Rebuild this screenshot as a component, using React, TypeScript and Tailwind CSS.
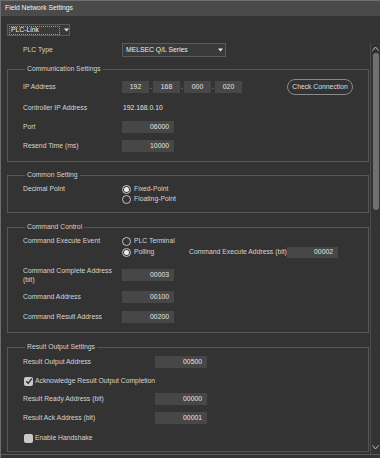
import React from 'react';

const font = "font-['Liberation_Sans',Arial,sans-serif]";

const Arrow = () => (
    <svg width="5" height="4" viewBox="0 0 5 4" className="block">
        <path d="M0 0.5 H5 L2.5 3.5 Z" fill="#e8e8e8" />
    </svg>
);

const NumBox = ({ value, w = 'w-[52px]', h = 'h-[12px]' }: { value: string; w?: string; h?: string }) => (
    <div className={`${w} ${h} bg-[#474747] flex items-center justify-end pr-[5px] text-[#e4e4e4]`}>{value}</div>
);

const IpBox = ({ value }: { value: string }) => (
    <div className="w-[27px] h-[12px] bg-[#474747] flex items-center justify-center text-[#e4e4e4]">{value}</div>
);

const Dot = () => <div className="w-[4px] text-center text-[#cfcfcf]">.</div>;

const Radio = ({ checked, label }: { checked?: boolean; label: string }) => (
    <div className="flex items-center gap-[3px]">
        <div className="w-[9px] h-[9px] rounded-full border border-[#c4c4c4] flex items-center justify-center">
            {checked && <div className="w-[5px] h-[5px] rounded-full bg-[#ececec]" />}
        </div>
        <span>{label}</span>
    </div>
);

const Check = ({ checked, label }: { checked?: boolean; label: string }) => (
    <div className="flex items-center gap-[2px]">
        <div className="w-[9px] h-[9px] rounded-[2px] bg-[#c9c9c9] flex items-center justify-center">
            {checked && (
                <svg width="8" height="8" viewBox="0 0 8 8">
                    <path d="M1.2 4.2 L3.2 6.2 L6.8 1.6" stroke="#2a2a2a" strokeWidth="1.4" fill="none" />
                </svg>
            )}
        </div>
        <span>{label}</span>
    </div>
);

const Group = ({ title, className, children }: { title: string; className: string; children: React.ReactNode }) => (
    <fieldset className={`ml-[6px] w-[362px] border border-[#565656] ${className}`}>
        <legend className="ml-[2px] px-[2px] leading-[10px] text-[#d2d2d2]">{title}</legend>
        {children}
    </fieldset>
);

const App = () => {
    return (
        <div className={`w-[380px] h-[458px] bg-[#333333] border-t border-l border-[#6e6e6e] flex flex-col overflow-hidden ${font} text-[6.8px] text-[#d4d4d4]`}>
            {/* Title bar */}
            <div className="h-[15px] shrink-0 bg-[#4a4a4a] flex items-center pl-[4px] text-[#f2f2f2]">Field Network Settings</div>

            {/* Network selector */}
            <div className="mt-[8px] ml-[6px] w-[63px] h-[12px] shrink-0 bg-[#3a3a3a] border border-[#5a5a5a] flex items-center">
                <div className="ml-[1px] w-[51px] h-[9px] border border-dotted border-[#9a9a9a] flex items-center pl-[1px] text-[#f0f0f0]">PLC-Link</div>
                <div className="ml-[4px]"><Arrow /></div>
            </div>

            {/* Scroll area */}
            <div className="mt-[7px] h-[412px] shrink-0 flex border-b border-[#5c5c5c] overflow-hidden">
                <div className="w-[369px] shrink-0 flex flex-col">
                    <div className="h-[14px] shrink-0 flex items-center">
                        <div className="pl-[22px] w-[121px]">PLC Type</div>
                        <div className="w-[104px] h-[14px] bg-[#3a3a3a] border border-[#5a5a5a] flex items-center justify-between pl-[3px] pr-[2px] text-[#ececec]">
                            <span>MELSEC Q/L Series</span>
                            <Arrow />
                        </div>
                    </div>

                    {/* Communication Settings */}
                    <Group title="Communication Settings" className="mt-[7px] pt-[5px] pb-[9px] pl-[15px]">
                        <div className="h-[16px] flex items-center">
                            <div className="w-[99px]">IP Address</div>
                            <IpBox value="192" />
                            <Dot />
                            <IpBox value="168" />
                            <Dot />
                            <IpBox value="000" />
                            <Dot />
                            <IpBox value="020" />
                            <div className="ml-[45px] w-[66px] h-[16px] rounded-full border border-[#8a8a8a] flex items-center justify-center text-[#dedede]">Check Connection</div>
                        </div>
                        <div className="mt-[7px] h-[12px] flex items-center">
                            <div className="w-[100px]">Controller IP Address</div>
                            <span className="text-[#e2e2e2]">192.168.0.10</span>
                        </div>
                        <div className="mt-[7px] h-[12px] flex items-center">
                            <div className="w-[99px]">Port</div>
                            <NumBox value="06000" />
                        </div>
                        <div className="mt-[7px] h-[12px] flex items-center">
                            <div className="w-[99px]">Resend Time (ms)</div>
                            <NumBox value="10000" />
                        </div>
                    </Group>

                    {/* Common Setting */}
                    <Group title="Common Setting" className="mt-[8px] pt-[4px] pb-[8px] pl-[15px]">
                        <div className="flex">
                            <div className="w-[99px] h-[10px] flex items-center">Decimal Point</div>
                            <div className="flex flex-col">
                                <div className="h-[10px] flex items-center"><Radio checked label="Fixed-Point" /></div>
                                <div className="h-[10px] flex items-center"><Radio label="Floating-Point" /></div>
                            </div>
                        </div>
                    </Group>

                    {/* Command Control */}
                    <Group title="Command Control" className="mt-[9px] pt-[4px] pb-[9px] pl-[15px]">
                        <div className="flex">
                            <div className="w-[99px] h-[11px] flex items-center">Command Execute Event</div>
                            <div className="flex flex-col">
                                <div className="h-[11px] flex items-center"><Radio label="PLC Terminal" /></div>
                                <div className="h-[11px] flex items-center">
                                    <div className="w-[67px]"><Radio checked label="Polling" /></div>
                                    <div className="w-[98px]">Command Execute Address (bit)</div>
                                    <NumBox value="00002" w="w-[51px]" h="h-[11px]" />
                                </div>
                            </div>
                        </div>
                        <div className="mt-[8px] h-[18px] flex items-center">
                            <div className="w-[99px] leading-[9px]">Command Complete Address<br />(bit)</div>
                            <NumBox value="00003" />
                        </div>
                        <div className="mt-[7px] h-[12px] flex items-center">
                            <div className="w-[99px]">Command Address</div>
                            <NumBox value="00100" />
                        </div>
                        <div className="mt-[8px] h-[12px] flex items-center">
                            <div className="w-[99px]">Command Result Address</div>
                            <NumBox value="00200" />
                        </div>
                    </Group>

                    {/* Result Output Settings */}
                    <Group title="Result Output Settings" className="mt-[9px] pt-[4px] pb-[8px] pl-[15px]">
                        <div className="h-[12px] flex items-center">
                            <div className="w-[132px]">Result Output Address</div>
                            <NumBox value="00500" />
                        </div>
                        <div className="mt-[8px] h-[10px] flex items-center pl-[1px]">
                            <Check checked label="Acknowledge Result Output Completion" />
                        </div>
                        <div className="mt-[7px] h-[12px] flex items-center">
                            <div className="w-[132px]">Result Ready Address (bit)</div>
                            <NumBox value="00000" />
                        </div>
                        <div className="mt-[7px] h-[12px] flex items-center">
                            <div className="w-[132px]">Result Ack Address (bit)</div>
                            <NumBox value="00001" />
                        </div>
                        <div className="mt-[9px] h-[10px] flex items-center pl-[1px]">
                            <Check label="Enable Handshake" />
                        </div>
                    </Group>
                </div>

                {/* Scrollbar */}
                <div className="w-[10px] shrink-0 border-l border-[#4c4c4c] flex flex-col items-center">
                    <svg width="7" height="5" viewBox="0 0 7 5" className="mt-[3px] block">
                        <path d="M0.5 4.5 L3.5 1 L6.5 4.5" stroke="#bdbdbd" strokeWidth="1" fill="none" />
                    </svg>
                    <div className="mt-[2px] w-[6px] h-[157px] rounded-full bg-[#707070]" />
                    <div className="flex-1" />
                    <svg width="7" height="5" viewBox="0 0 7 5" className="mb-[4px] block">
                        <path d="M0.5 0.5 L3.5 4 L6.5 0.5" stroke="#bdbdbd" strokeWidth="1" fill="none" />
                    </svg>
                </div>
            </div>
        </div>
    );
};

export default App;
